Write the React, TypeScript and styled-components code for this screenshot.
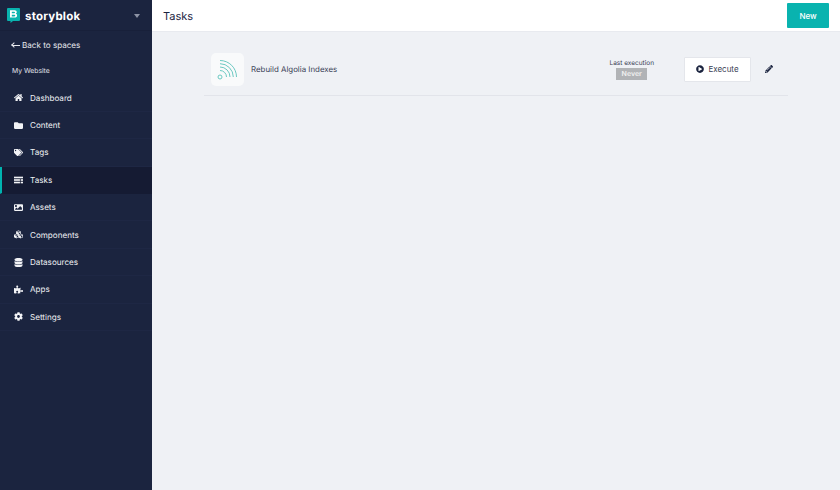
import React from "react";
import styled, { createGlobalStyle } from "styled-components";
import {
  FaHome,
  FaFolder,
  FaTags,
  FaImage,
  FaCubes,
  FaDatabase,
  FaPuzzlePiece,
  FaCog,
  FaPlayCircle,
  FaPencilAlt,
} from "react-icons/fa";

const GlobalStyle = createGlobalStyle`
  html, body {
    margin: 0;
    height: 100%;
    background: #eff1f5;
    font-family: Inter, "Liberation Sans", sans-serif;
    text-rendering: geometricPrecision;
  }
  * { box-sizing: border-box; }
`;

const Page = styled.div`
  display: flex;
  width: 840px;
  height: 490px;
  overflow: hidden;
`;

const Sidebar = styled.aside`
  width: 152px;
  flex-shrink: 0;
  background: #1b243f;
  color: #fff;
  display: flex;
  flex-direction: column;
`;

const Brand = styled.div`
  height: 31px;
  padding: 1px 12px 0 7px;
  display: flex;
  align-items: center;
  gap: 5px;
  border-bottom: 1px solid #18203a;
`;

const BrandName = styled.span`
  font-size: 11.5px;
  font-weight: 700;
  letter-spacing: 0.2px;
  flex: 1;
`;

const Caret = styled.span`
  width: 0;
  height: 0;
  border-left: 3px solid transparent;
  border-right: 3px solid transparent;
  border-top: 4px solid #8d93a5;
`;

const BackLink = styled.div`
  font-size: 8.1px;
  font-weight: 400;
  color: #e6e8ed;
  padding-left: 12px;
  height: 28px;
  display: flex;
  align-items: center;
  gap: 2px;
`;

const BackArrow = styled.span`
  position: relative;
  width: 8px;
  height: 1px;
  background: #e6e8ed;

  &::before {
    content: "";
    position: absolute;
    left: 0;
    top: -1.5px;
    width: 3px;
    height: 3px;
    border-left: 1px solid #e6e8ed;
    border-bottom: 1px solid #e6e8ed;
    transform: rotate(45deg);
  }
`;

const SpaceName = styled.div`
  font-size: 6.8px;
  font-weight: 400;
  color: #e0e3ea;
  padding: 7px 0 0 12px;
  height: 25.5px;
`;

const Menu = styled.ul`
  list-style: none;
  margin: 0;
  padding: 0;
`;

const Item = styled.li<{ $active?: boolean }>`
  height: 27.4px;
  display: flex;
  align-items: center;
  gap: 6px;
  font-size: 8.1px;
  font-weight: 400;
  color: #f0f1f4;
  background: ${(props) => (props.$active ? "#151b33" : "transparent")};
  border-left: ${(props) => (props.$active ? "2px solid #00b3b0" : "0")};
  padding-left: ${(props) => (props.$active ? "11px" : "13px")};
  border-bottom: 1px solid ${(props) => (props.$active ? "#151b33" : "#1e2744")};
`;

const IconSlot = styled.span`
  width: 11px;
  display: flex;
  justify-content: center;
  font-size: 9px;
  color: #f2f3f6;
`;

const Main = styled.main`
  flex: 1;
  display: flex;
  flex-direction: column;
  min-width: 0;
`;

const TopBar = styled.header`
  height: 32px;
  background: #fff;
  border-bottom: 1px solid #e8eaef;
  display: flex;
  align-items: center;
  justify-content: space-between;
  padding: 0 11px;
`;

const Title = styled.h1`
  margin: 0;
  font-size: 11px;
  font-weight: 400;
  color: #1b243f;
`;

const NewButton = styled.button`
  width: 42px;
  height: 25px;
  background: #09b3af;
  color: #fff;
  border: 0;
  border-radius: 1px;
  font: 500 8px Inter, "Liberation Sans", sans-serif;
`;

const Content = styled.div`
  padding: 16px 52px 0 52px;
`;

const TaskRow = styled.div`
  height: 48px;
  display: flex;
  align-items: center;
  padding: 0 15px 5px 7px;
  border-bottom: 1px solid #e2e4ea;
`;

const TaskIcon = styled.div`
  width: 33px;
  height: 33px;
  background: #f9fafb;
  border-radius: 5px;
  display: flex;
  align-items: center;
  justify-content: center;
  margin-right: 7px;
`;

const TaskName = styled.span`
  flex: 1;
  font-size: 7.9px;
  font-weight: 400;
  color: #3a3f55;
`;

const Execution = styled.div`
  display: flex;
  flex-direction: column;
  align-items: center;
  gap: 1px;
  margin-right: 30px;
`;

const ExecutionLabel = styled.span`
  font-size: 6.5px;
  color: #3a3f55;
`;

const NeverBadge = styled.span`
  width: 31px;
  height: 12px;
  background: #b1b3b6;
  color: #f1f1f1;
  font-size: 7px;
  font-weight: 600;
  display: flex;
  align-items: center;
  justify-content: center;
`;

const ExecuteButton = styled.button`
  width: 67px;
  height: 25px;
  background: #fff;
  border: 1px solid #e4e6eb;
  border-radius: 1px;
  color: #3a3f55;
  font: 400 8px Inter, "Liberation Sans", sans-serif;
  display: flex;
  align-items: center;
  justify-content: center;
  gap: 4px;
  margin-right: 14px;
  svg { color: #1b243f; font-size: 8px; }
`;

const EditIcon = styled.span`
  display: flex;
  font-size: 8px;
  color: #1b243f;
`;

const Logo = () => (
  <svg width="13" height="15" viewBox="0 0 13 15">
    <path d="M1 0h11a1 1 0 0 1 1 1v11a1 1 0 0 1-1 1H6l-2.5 2v-2H1a1 1 0 0 1-1-1V1a1 1 0 0 1 1-1z" fill="#09b3af" />
    <path
      fillRule="evenodd"
      fill="#fff"
      d="M3 2.2h4.6c1.4 0 2.2.8 2.2 1.9 0 .7-.4 1.3-1 1.6.8.2 1.3.9 1.3 1.7 0 1.3-1 2.2-2.4 2.2H3zM4.8 3.8v1.5h2.4c.5 0 .8-.3.8-.8s-.3-.7-.8-.7zm0 3v1.6h2.6c.6 0 .9-.3.9-.8s-.3-.8-.9-.8z"
    />
  </svg>
);

const TasksGlyph = () => (
  <svg width="9" height="8" viewBox="0 0 10 8" fill="currentColor">
    <rect x="0" y="0.3" width="10" height="1.8" />
    <rect x="0" y="3.1" width="6.6" height="1.8" />
    <rect x="7.4" y="3.1" width="2.6" height="1.8" />
    <rect x="0" y="5.9" width="6.6" height="1.8" />
    <rect x="7.4" y="5.9" width="2.6" height="1.8" />
  </svg>
);

const AlgoliaGlyph = () => (
  <svg width="21" height="21" viewBox="0 0 21 21" fill="none" stroke="#6cc9c2" strokeWidth="1">
    <circle cx="3" cy="18" r="2" />
    <path d="M3 11.5a6.5 6.5 0 0 1 6.5 6.5" />
    <path d="M3 8a10 10 0 0 1 10 10" />
    <path d="M3 4.7a13.3 13.3 0 0 1 13.3 13.3" />
    <path d="M3 1.5a16.5 16.5 0 0 1 16.5 16.5" />
  </svg>
);

const links = [
  { label: "Dashboard", icon: <FaHome /> },
  { label: "Content", icon: <FaFolder /> },
  { label: "Tags", icon: <FaTags /> },
  { label: "Tasks", icon: <TasksGlyph />, active: true },
  { label: "Assets", icon: <FaImage /> },
  { label: "Components", icon: <FaCubes /> },
  { label: "Datasources", icon: <FaDatabase /> },
  { label: "Apps", icon: <FaPuzzlePiece /> },
  { label: "Settings", icon: <FaCog /> },
];

const App = () => (
  <>
    <GlobalStyle />
    <Page>
      <Sidebar>
        <Brand>
          <Logo />
          <BrandName>storyblok</BrandName>
          <Caret />
        </Brand>
        <BackLink>
          <BackArrow />
          Back to spaces
        </BackLink>
        <SpaceName>My Website</SpaceName>
        <Menu>
          {links.map((link) => (
            <Item key={link.label} $active={link.active}>
              <IconSlot>{link.icon}</IconSlot>
              {link.label}
            </Item>
          ))}
        </Menu>
      </Sidebar>
      <Main>
        <TopBar>
          <Title>Tasks</Title>
          <NewButton>New</NewButton>
        </TopBar>
        <Content>
          <TaskRow>
            <TaskIcon>
              <AlgoliaGlyph />
            </TaskIcon>
            <TaskName>Rebuild Algolia Indexes</TaskName>
            <Execution>
              <ExecutionLabel>Last execution</ExecutionLabel>
              <NeverBadge>Never</NeverBadge>
            </Execution>
            <ExecuteButton>
              <FaPlayCircle />
              Execute
            </ExecuteButton>
            <EditIcon>
              <FaPencilAlt />
            </EditIcon>
          </TaskRow>
        </Content>
      </Main>
    </Page>
  </>
);

export default App;
